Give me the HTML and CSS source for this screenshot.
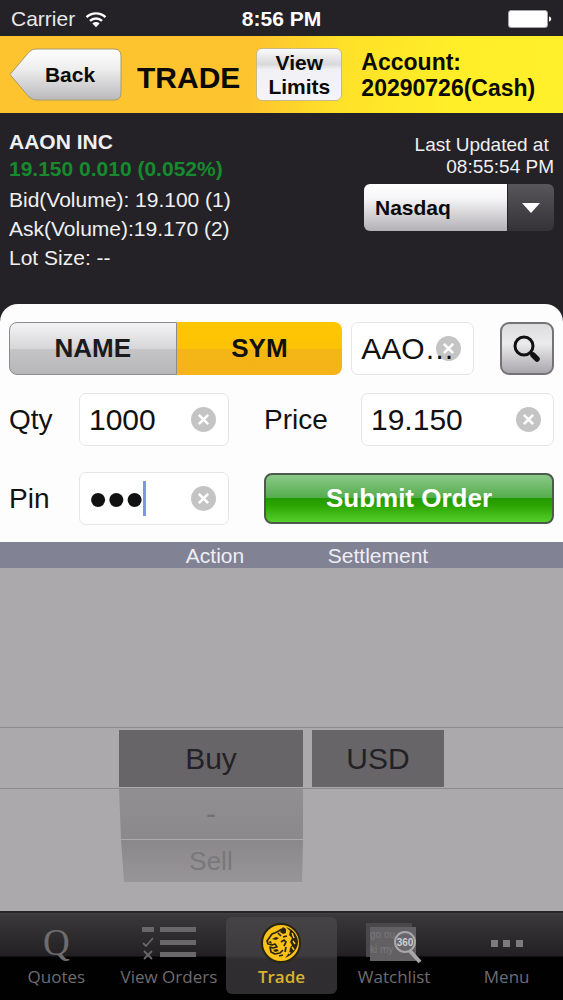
FILE: index.html
```
<!DOCTYPE html>
<html lang="en">

<head>
    <meta charset="utf-8">
    <meta name="viewport" content="width=device-width, initial-scale=1">
    <title>Trade</title>
    <link rel="stylesheet" href="styles.css">
</head>

<body>
    <div class="statusBar">
        <div class="carrier">
            <span>Carrier</span>
            <svg width="22" height="17" viewBox="0 0 22 17">
                <path d="M1.5 6.2a13.6 13.6 0 0 1 19 0M5 9.9a8.6 8.6 0 0 1 12 0" fill="none" stroke="#fff" stroke-width="2.4"/>
                <path d="M11 16.2l-3.6-3.7a5.2 5.2 0 0 1 7.2 0z" fill="#fff"/>
            </svg>
        </div>
        <span class="clock">8:56 PM</span>
        <div class="battery">
            <svg width="44" height="18" viewBox="0 0 44 18">
                <rect x="0.5" y="0.5" width="39" height="17" rx="2.5" fill="#fff" stroke="#a5a4a6"/>
                <path d="M41 6.5c3 .5 3 4.5 0 5z" fill="#fff"/>
            </svg>
        </div>
    </div>

    <div class="header">
        <button class="back">
            <svg viewBox="0 0 113 53" preserveAspectRatio="none">
                <defs>
                    <linearGradient id="silver" x1="0" y1="0" x2="0" y2="1">
                        <stop offset="0" stop-color="#fff"/>
                        <stop offset="0.4" stop-color="#ededee"/>
                        <stop offset="1" stop-color="#b9b8bb"/>
                    </linearGradient>
                </defs>
                <path d="M1 26.5L20 4Q23 1 27 1H105Q112 1 112 8V45Q112 52 105 52H27Q23 52 20 49Z" fill="url(#silver)" stroke="#a89a6c"/>
            </svg>
            <span>Back</span>
        </button>
        <h1>TRADE</h1>
        <button class="limits">View<br>Limits</button>
        <div class="account">Account:<br>20290726(Cash)</div>
    </div>

    <div class="info">
        <div class="quote">
            <h2>AAON INC</h2>
            <p class="up">19.150 0.010 (0.052%)</p>
            <p>Bid(Volume): 19.100 (1)</p>
            <p>Ask(Volume):19.170 (2)</p>
            <p>Lot Size: --</p>
        </div>
        <div class="updated">
            <p>Last Updated at&nbsp;<br>08:55:54 PM</p>
            <div class="market">
                <select aria-label="Market">
                    <option>Nasdaq</option>
                </select>
                <svg width="18" height="10" viewBox="0 0 18 10"><path d="M0 0h18l-9 10z" fill="#fff"/></svg>
            </div>
        </div>
    </div>

    <form class="order" onsubmit="return false">
        <div class="row">
            <div class="segment">
                <button type="button">NAME</button>
                <button type="button" class="on">SYM</button>
            </div>
            <div class="field symbol">
                <input type="text" aria-label="Symbol" value="AAO…">
                <button type="button" class="clear" aria-label="Clear symbol">
                    <svg viewBox="0 0 24 24"><path d="M7.5 7.5l9 9M16.5 7.5l-9 9"/></svg>
                </button>
            </div>
            <button type="button" class="search" aria-label="Search">
                <svg width="28" height="28" viewBox="0 0 28 28">
                    <circle cx="11" cy="11" r="9" fill="none" stroke="#111" stroke-width="3"/>
                    <path d="M17 17l3 3" stroke="#111" stroke-width="2.5"/>
                    <path d="M20 20l4 4" stroke="#111" stroke-width="5.5" stroke-linecap="round"/>
                </svg>
            </button>
        </div>
        <div class="row wide">
            <div class="left">
                <label for="qty">Qty</label>
                <div class="field">
                    <input type="text" id="qty" value="1000">
                    <button type="button" class="clear" aria-label="Clear quantity">
                        <svg viewBox="0 0 24 24"><path d="M7.5 7.5l9 9M16.5 7.5l-9 9"/></svg>
                    </button>
                </div>
            </div>
            <div class="right">
                <label for="price">Price</label>
                <div class="field">
                    <input type="text" id="price" value="19.150">
                    <button type="button" class="clear" aria-label="Clear price">
                        <svg viewBox="0 0 24 24"><path d="M7.5 7.5l9 9M16.5 7.5l-9 9"/></svg>
                    </button>
                </div>
            </div>
        </div>
        <div class="row wide">
            <div class="left">
                <label for="pin">Pin</label>
                <div class="field">
                    <input type="password" id="pin" value="123">
                    <span class="caret"></span>
                    <button type="button" class="clear" aria-label="Clear pin">
                        <svg viewBox="0 0 24 24"><path d="M7.5 7.5l9 9M16.5 7.5l-9 9"/></svg>
                    </button>
                </div>
            </div>
            <div class="right">
                <button class="submit">Submit Order</button>
            </div>
        </div>
    </form>

    <div class="pickerHead">
        <span class="action">Action</span>
        <span class="settle">Settlement</span>
    </div>
    <div class="picker">
        <div class="action">
            <button class="selected">Buy</button>
            <button class="next">-</button>
            <button class="last">Sell</button>
        </div>
        <div class="settle">
            <button class="selected">USD</button>
        </div>
        <div class="band"></div>
    </div>

    <nav class="tabs">
        <a href="#quotes">
            <span class="icon bigQ">Q</span>
            <span>Quotes</span>
        </a>
        <a href="#orders">
            <span class="icon">
                <svg width="56" height="36" viewBox="0 0 56 36">
                    <path d="M1 2h12v5H1zM19 2h36v5H19zM19 15h36v5H19zM19 27h36v5H19z" fill="#69676a"/>
                    <path d="M2 18l3 3 7-8M3 26l8 8M11 26l-8 8" fill="none" stroke="#69676a" stroke-width="1.8"/>
                </svg>
            </span>
            <span>View Orders</span>
        </a>
        <a href="#trade" class="current">
            <span class="icon">
                <svg width="40" height="40" viewBox="0 0 40 40">
                    <circle cx="20" cy="20" r="19" fill="#fbc21a" stroke="#2b2411" stroke-width="2"/>
                    <!-- mane -->
                    <path d="M25 4c8 3 12 9 12 16-1 7-6 12-13 15 3-3 5-7 5-10l2-3-2-3 2-4-3-3 1-4z" fill="#2b2411"/>
                    <path d="M31 10l2 5M32 18l2 3M31 24l2 3M29 29l-1 2" stroke="#fbc21a" stroke-width="1.5" fill="none"/>
                    <!-- head and jaw -->
                    <path d="M22 4l3 2v4l-3 1-3-2z" fill="#2b2411"/>
                    <path d="M21 6l-5 3-5 2-5 7 1 3 4 1 3-1 2 3-4 1-3-1 1 5 4 2 5-1 3-3" fill="none" stroke="#2b2411" stroke-width="1.7" stroke-linejoin="round"/>
                    <path d="M11 16l4-2 3 1-3 2zM7 19l3-1 1 3zM12 27l4-1 2 2-4 1z" fill="#2b2411"/>
                    <path d="M17 10l3 3M22 14l4-1M20 19l3-2 2 2-2 4M18 33l4-1M25 24l-1 5" fill="none" stroke="#2b2411" stroke-width="1.7"/>
                </svg>
            </span>
            <span>Trade</span>
        </a>
        <a href="#watchlist">
            <span class="icon">
                <svg width="58" height="42" viewBox="0 0 58 42">
                    <path d="M1 1h46v34H1z" fill="#4a484b"/>
                    <path d="M5 5h46v34H5z" fill="#626063"/>
                    <g class="scribble" fill="#7b797c">
                        <text x="5" y="16">go ou</text>
                        <text x="5" y="31">ki my</text>
                    </g>
                    <path d="M45 29l10 11" stroke="#a9a7aa" stroke-width="4"/>
                    <circle cx="40" cy="20" r="10" fill="#68666a" stroke="#a9a7aa" stroke-width="2"/>
                    <text class="deg" x="40" y="24" text-anchor="middle" fill="#d0ced1">360</text>
                </svg>
            </span>
            <span>Watchlist</span>
        </a>
        <a href="#menu">
            <span class="icon">
                <svg width="34" height="36" viewBox="0 0 34 36"><path d="M1 15h7v7H1zM13 15h7v7h-7zM26 15h7v7h-7z" fill="#7d7b7e"/></svg>
            </span>
            <span>Menu</span>
        </a>
    </nav>
</body>

</html>
```
FILE: styles.css
```
* {
    box-sizing: border-box;
}

body {
    margin: 0;
    min-height: 100vh;
    display: flex;
    flex-direction: column;
    font-family: "Liberation Sans", Arial, sans-serif;
    background: #242226;
    color: #111;
}

button, input, select {
    font-family: inherit;
    margin: 0;
    padding: 0;
    border: 0;
    color: inherit;
}

h1, h2, p {
    margin: 0;
}

.statusBar {
    display: flex;
    align-items: center;
    height: 36px;
    padding: 2px 11px 0 11px;
    color: #fff;
    font-size: 21px;
}

.carrier, .battery {
    flex: 1;
    display: flex;
    align-items: center;
    gap: 10px;
    color: #e8e8e9;
}

.battery {
    justify-content: flex-end;
}

.clock {
    font-weight: bold;
}

.header {
    display: flex;
    align-items: center;
    height: 77px;
    padding: 0 9px;
    background: linear-gradient(100deg, #fdc42f 45%, #fee128 60%, #ffee28 80%, #fff02c);
    color: #0c0a06;
    font-weight: bold;
}

.back {
    position: relative;
    width: 113px;
    height: 53px;
    padding-left: 9px;
    background: none;
    font-size: 21px;
    font-weight: bold;
}

.back svg {
    position: absolute;
    left: 0;
    top: 0;
    width: 100%;
    height: 100%;
}

.back span {
    position: relative;
}

h1 {
    margin-left: 15px;
    padding-top: 7px;
    font-size: 30px;
}

.limits {
    width: 86px;
    height: 53px;
    margin-left: 16px;
    border: 1px solid #c9b98a;
    border-radius: 6px;
    background: linear-gradient(#fbfbfb, #d9d8da 30%, #f1f0f4 40%, #f5f4f8);
    font-size: 21px;
    font-weight: bold;
    line-height: 24px;
}

.account {
    margin-left: 19px;
    font-size: 23px;
    line-height: 26px;
}

.info {
    display: flex;
    justify-content: space-between;
    padding: 15px 9px 32px 9px;
    color: #f0eff1;
    font-size: 21px;
}

.info h2 {
    font-size: 21px;
    line-height: 27px;
}

.quote p {
    line-height: 29px;
}

.quote .up {
    color: #168a2e;
    font-weight: bold;
    line-height: 27px;
    margin-bottom: 3px;
}

.updated {
    padding-top: 6px;
    text-align: right;
    font-size: 19px;
    line-height: 22px;
}

.market {
    position: relative;
    width: 190px;
    margin-top: 6px;
}

.market select {
    appearance: none;
    display: block;
    width: 100%;
    height: 47px;
    padding-left: 11px;
    border-radius: 6px;
    background: linear-gradient(#fff, #f6f5f7 30%, #b2b0b4) left / 143px 100% no-repeat,
        linear-gradient(#58565a, #343236) right / 46px 100% no-repeat;
    color: #0b0b0b;
    font-size: 21px;
    font-weight: bold;
}

.market svg {
    position: absolute;
    right: 14px;
    top: 19px;
    pointer-events: none;
}

.order {
    padding: 18px 9px 17px 9px;
    border-radius: 18px 18px 0 0;
    background: #fefdfe;
}

.row {
    display: flex;
    height: 53px;
}

.wide {
    gap: 35px;
    margin-top: 18px;
}

.wide + .wide {
    margin-top: 26px;
}

.left, .right {
    display: flex;
    align-items: center;
    flex: 220 1 0;
}

.right {
    flex: 290 1 0;
}

label {
    width: 70px;
    font-size: 28px;
}

.right label {
    width: 97px;
}

.segment {
    display: flex;
    flex: 334 1 0;
}

.segment button {
    flex: 1;
    border: 1px solid #8d8b8e;
    border-radius: 8px 0 0 8px;
    background: linear-gradient(#f4f3f5, #d6d5d7 50%, #c5c4c6 51%, #b6b5b8);
    color: #1b1a1d;
    font-size: 26px;
    font-weight: bold;
}

.segment .on {
    border: 0;
    border-radius: 0 8px 8px 0;
    background: linear-gradient(#fec700, #fcc206 50%, #f4b515 51%, #f5b41a);
    color: #111;
}

.field {
    position: relative;
    flex: 1;
    height: 53px;
}

.symbol {
    flex: 123 1 0;
    margin: 0 26px 0 9px;
}

.field input {
    display: block;
    width: 100%;
    height: 100%;
    padding: 0 40px 0 9px;
    border: 1px solid #e6e4e7;
    border-radius: 7px;
    background: #fff;
    outline: none;
    font-size: 30px;
}

.symbol input {
    padding-right: 20px;
}

.field input[type="password"] {
    font-size: 52px;
}

.clear {
    position: absolute;
    right: 13px;
    top: 14px;
    width: 25px;
    height: 25px;
    border-radius: 50%;
    background: rgba(0, 0, 0, 0.23);
}

.clear svg {
    display: block;
    width: 100%;
    height: 100%;
    fill: none;
    stroke: #fff;
    stroke-width: 2.5;
}

.caret {
    position: absolute;
    left: 64px;
    top: 9px;
    width: 3px;
    height: 35px;
    background: #7d97e6;
}

.search {
    width: 54px;
    border: 2px solid #757377;
    border-radius: 9px;
    background: linear-gradient(#dcdbdd, #ebeaec 40%, #a9a7ab);
}

.search svg {
    display: block;
    margin: auto;
}

.submit {
    width: 100%;
    height: 51px;
    border: 2px solid #4b5a4b;
    border-radius: 8px;
    background: linear-gradient(#8bc98a, #55ad4c 48%, #239b00 50%, #2ca502 65%, #56cf2b);
    color: #fff;
    font-size: 26px;
    font-weight: bold;
}

.pickerHead {
    display: flex;
    justify-content: center;
    gap: 9px;
    height: 26px;
    background: #828295;
    color: #eeeef6;
    font-size: 21px;
    line-height: 27px;
    text-align: center;
}

.action {
    width: 184px;
}

.settle {
    width: 132px;
}

.pickerHead .settle {
    width: 124px;
}

.picker {
    position: relative;
    flex: 1;
    display: flex;
    justify-content: center;
    gap: 9px;
    padding: 162px 0 29px 0;
    background: #aba9ab;
}

.picker button {
    display: block;
    width: 100%;
    font-size: 30px;
}

.picker .selected {
    height: 57px;
    background: #676568;
    color: #232125;
}

.picker .next {
    height: 51px;
    margin-top: 1px;
    background: linear-gradient(#918f91, #8b898b);
    color: #737173;
    clip-path: polygon(0 0, 100% 0, 100% 100%, 2px 100%);
}

.picker .last {
    height: 42px;
    margin-top: 1px;
    background: linear-gradient(#8a888a, #979597);
    color: #7a787a;
    font-size: 26px;
    clip-path: polygon(2px 0, 100% 0, 183px 100%, 5px 100%);
}

/* selection lines over the wheels */
.band {
    position: absolute;
    left: 0;
    right: 0;
    top: 159px;
    height: 62px;
    border: solid #8c8a8c;
    border-width: 1px 0;
    pointer-events: none;
}

.tabs {
    display: flex;
    height: 89px;
    border-top: 2px solid #272528;
    background: linear-gradient(#444245, #3a383b 2px, #222023 43px, #010101 44px);
}

.tabs a {
    flex: 1;
    display: flex;
    flex-direction: column;
    align-items: center;
    margin: 4px 1px 6px 1px;
    padding-top: 5px;
    border-radius: 6px;
    color: #6e6c6f;
    font-family: "Open Sans", sans-serif;
    font-size: 17px;
    line-height: 24px;
    text-decoration: none;
    white-space: nowrap;
}

.icon {
    display: flex;
    align-items: center;
    justify-content: center;
    height: 42px;
    margin-bottom: 1px;
}

.bigQ {
    font-family: "Liberation Serif", serif;
    font-size: 37px;
}

.tabs .current {
    background: linear-gradient(#454346, #3d3b3e 50%, #302e31 55%, #2f2d30);
    color: #dcb32c;
    font-weight: 600;
}

.scribble {
    font-family: "Liberation Sans", sans-serif;
    font-size: 10px;
}

.deg {
    font-family: "Liberation Sans", sans-serif;
    font-size: 10px;
    font-weight: bold;
}
```
